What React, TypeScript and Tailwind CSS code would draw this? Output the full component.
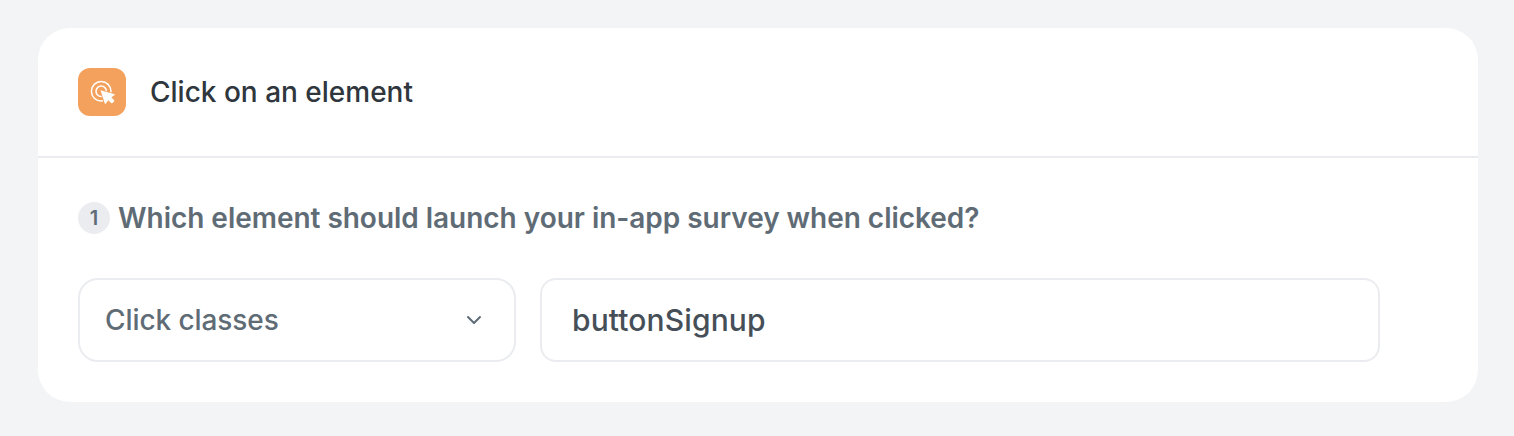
import { useState } from "react";

const ClickIcon = () => (
  <svg width="48" height="48" viewBox="0 0 48 48" fill="none">
    <circle cx="23.2" cy="23.3" r="9.8" stroke="white" strokeWidth="1.5" />
    <circle cx="23.2" cy="23.3" r="5.2" stroke="white" strokeWidth="1.5" />
    <path
      d="M22.5 22.3L36.6 26.2Q37.2 26.6 36.6 27L33.4 29.2L36.1 32.2Q36.6 32.9 36 33.6L34.5 35.1Q33.8 35.6 33.2 35L30.3 32.2L27.9 35.6Q27.2 36.4 26.8 35.6Z"
      fill="white"
      stroke="#F3A15C"
      strokeWidth="1.6"
      strokeLinejoin="round"
      paintOrder="stroke"
    />
  </svg>
);

const ChevronIcon = () => (
  <svg width="16" height="10" viewBox="0 0 16 10" fill="none">
    <path
      d="M2 2L8 8L14 2"
      stroke="#5F6C76"
      strokeWidth="2"
      strokeLinecap="round"
      strokeLinejoin="round"
    />
  </svg>
);

const App = () => {
  const [selector, setSelector] = useState("buttonSignup");

  return (
    <div className="h-screen bg-[#f3f4f6] px-[38px] pt-7 font-['Inter',sans-serif] font-medium">
      <div className="h-[374px] w-[1440px] rounded-[32px] bg-white">
        <div className="flex h-[130px] items-center gap-6 border-b-2 border-[#ebecf0] px-10">
          <div className="size-12 rounded-xl bg-[#f3a15c]">
            <ClickIcon />
          </div>
          <h2 className="text-[28px] leading-10 text-[#2f363d]">
            Click on an element
          </h2>
        </div>
        <div className="px-10 pt-10">
          <div className="flex h-10 items-center gap-2">
            <span className="flex size-8 items-center justify-center rounded-full bg-[#ebecf0] text-xl font-semibold text-[#5f6c76]">
              1
            </span>
            <p className="text-[28px] leading-10 font-semibold tracking-[-0.03px] text-[#5f6c76]">
              Which element should launch your in-app survey when clicked?
            </p>
          </div>
          <div className="mt-10 flex gap-6">
            <button className="flex h-[84px] w-[438px] items-center justify-between rounded-[20px] border-2 border-[#ebecf0] pr-8 pl-[25px] text-[28px] tracking-[-0.08px] text-[#5f6c76]">
              Click classes
              <ChevronIcon />
            </button>
            <input
              className="h-[84px] w-[840px] rounded-2xl border-2 border-[#ebecf0] px-[30px] text-[30px] tracking-[0.12px] text-[#464f58] outline-none"
              value={selector}
              onChange={(e) => setSelector(e.target.value)}
            />
          </div>
        </div>
      </div>
    </div>
  );
};

export default App;
